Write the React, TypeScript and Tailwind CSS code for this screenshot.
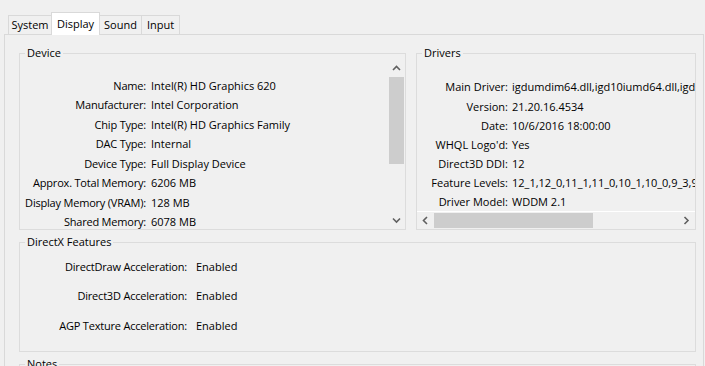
import React from "react";

const Chevron = ({ dir }: { dir: "up" | "down" | "left" | "right" }) => {
  const pts: Record<string, string> = {
    up: "1,5 4.5,1.5 8,5",
    down: "1,1.5 4.5,5 8,1.5",
    left: "5,1 1.5,4.5 5,8",
    right: "1.5,1 5,4.5 1.5,8",
  };
  const vertical = dir === "up" || dir === "down";
  return (
    <svg
      width={vertical ? 9 : 7}
      height={vertical ? 7 : 9}
      viewBox={vertical ? "0 0 9 7" : "0 0 7 9"}
    >
      <polyline points={pts[dir]} fill="none" stroke="#606060" strokeWidth="1.6" />
    </svg>
  );
};

const deviceRows: [string, string][] = [
  ["Name:", "Intel(R) HD Graphics 620"],
  ["Manufacturer:", "Intel Corporation"],
  ["Chip Type:", "Intel(R) HD Graphics Family"],
  ["DAC Type:", "Internal"],
  ["Device Type:", "Full Display Device"],
  ["Approx. Total Memory:", "6206 MB"],
  ["Display Memory (VRAM):", "128 MB"],
  ["Shared Memory:", "6078 MB"],
];

const driverRows: [string, string][] = [
  ["Main Driver:", "igdumdim64.dll,igd10iumd64.dll,igd10iumd64.dll,igd12umd64.dll"],
  ["Version:", "21.20.16.4534"],
  ["Date:", "10/6/2016 18:00:00"],
  ["WHQL Logo'd:", "Yes"],
  ["Direct3D DDI:", "12"],
  ["Feature Levels:", "12_1,12_0,11_1,11_0,10_1,10_0,9_3,9_2,9_1"],
  ["Driver Model:", "WDDM 2.1"],
];

const dxRows: [string, string][] = [
  ["DirectDraw Acceleration:", "Enabled"],
  ["Direct3D Acceleration:", "Enabled"],
  ["AGP Texture Acceleration:", "Enabled"],
];

const Legend = ({ children }: { children: React.ReactNode }) => (
  <legend className="ml-[5px] px-[2px] leading-[14px]">{children}</legend>
);

export default function App() {
  return (
    <div className="w-[705px] h-[366px] overflow-hidden bg-[#f0f0f0] text-[11px] text-black font-['Open_Sans','Noto_Sans',sans-serif]">
      {/* Tabs */}
      <div className="relative z-10 mt-[12px] flex h-[23px] items-end pl-[8px]">
        <div className="mb-[1px] flex h-[19px] w-[43px] items-center justify-center border-l border-t border-[#d9d9d9] bg-[#f0f0f0]">
          System
        </div>
        <div className="flex h-[23px] w-[49px] items-start justify-center border-l border-r border-t border-[#d9d9d9] bg-white pt-[3px]">
          Display
        </div>
        <div className="mb-[1px] flex h-[19px] w-[41px] items-center justify-center border-t border-[#d9d9d9] bg-[#f0f0f0]">
          Sound
        </div>
        <div className="mb-[1px] flex h-[19px] w-[39px] items-center justify-center border-l border-r border-t border-[#d9d9d9] bg-[#f0f0f0]">
          Input
        </div>
      </div>

      {/* Page */}
      <div className="-mt-[1px] ml-[4px] mr-[1px] h-[400px] border-l border-r border-t border-[#d9d9d9] bg-[#f0f0f0] pl-[14px] pr-[7px] pt-[11px]">
        <div className="flex gap-[10px]">
          {/* Device */}
          <fieldset className="w-[387px] min-w-0 shrink-0 border border-[#dcdcdc]">
            <Legend>Device</Legend>
            <div className="flex h-[169px]">
              <div className="min-w-0 flex-1 overflow-hidden pt-[16px]">
                {deviceRows.map(([k, v]) => (
                  <div key={k} className="flex h-[19.5px] items-center whitespace-nowrap">
                    <div className="w-[126px] shrink-0 text-right tracking-[-0.2px]">{k}</div>
                    <div className="pl-[5px]">{v}</div>
                  </div>
                ))}
              </div>
              <div className="flex w-[17px] shrink-0 flex-col bg-[#f0f0f0]">
                <div className="flex h-[17px] items-center justify-center">
                  <Chevron dir="up" />
                </div>
                <div className="mx-[1px] h-[87px] bg-[#cdcdcd]" />
                <div className="flex-1" />
                <div className="flex h-[17px] items-center justify-center">
                  <Chevron dir="down" />
                </div>
              </div>
            </div>
          </fieldset>

          {/* Drivers */}
          <fieldset className="w-[280px] min-w-0 shrink-0 border border-[#dcdcdc]">
            <Legend>Drivers</Legend>
            <div className="flex h-[169px] flex-col">
              <div className="min-w-0 flex-1 overflow-hidden pt-[18px]">
                {driverRows.map(([k, v]) => (
                  <div key={k} className="flex h-[19.2px] items-center whitespace-nowrap">
                    <div className="w-[91px] shrink-0 text-right">{k}</div>
                    <div className="pl-[4px]">{v}</div>
                  </div>
                ))}
              </div>
              <div className="flex h-[18px] shrink-0 items-stretch border-t border-white bg-[#f0f0f0]">
                <div className="flex w-[17px] items-center justify-center">
                  <Chevron dir="left" />
                </div>
                <div className="my-[1px] w-[159px] bg-[#cdcdcd]" />
                <div className="flex-1" />
                <div className="flex w-[17px] items-center justify-center">
                  <Chevron dir="right" />
                </div>
              </div>
            </div>
          </fieldset>
        </div>

        {/* DirectX Features */}
        <fieldset className="mt-[5px] min-w-0 border border-[#dcdcdc]">
          <Legend>DirectX Features</Legend>
          <div className="h-[102px] pt-[3px]">
            {dxRows.map(([k, v]) => (
              <div key={k} className="flex h-[29.5px] items-center whitespace-nowrap">
                <div className="w-[167px] shrink-0 text-right tracking-[-0.2px]">{k}</div>
                <div className="pl-[9px]">{v}</div>
              </div>
            ))}
          </div>
        </fieldset>

        {/* Notes */}
        <fieldset className="mt-[5px] min-w-0 border border-[#dcdcdc]">
          <Legend>Notes</Legend>
          <div className="h-[60px]" />
        </fieldset>
      </div>
    </div>
  );
}
